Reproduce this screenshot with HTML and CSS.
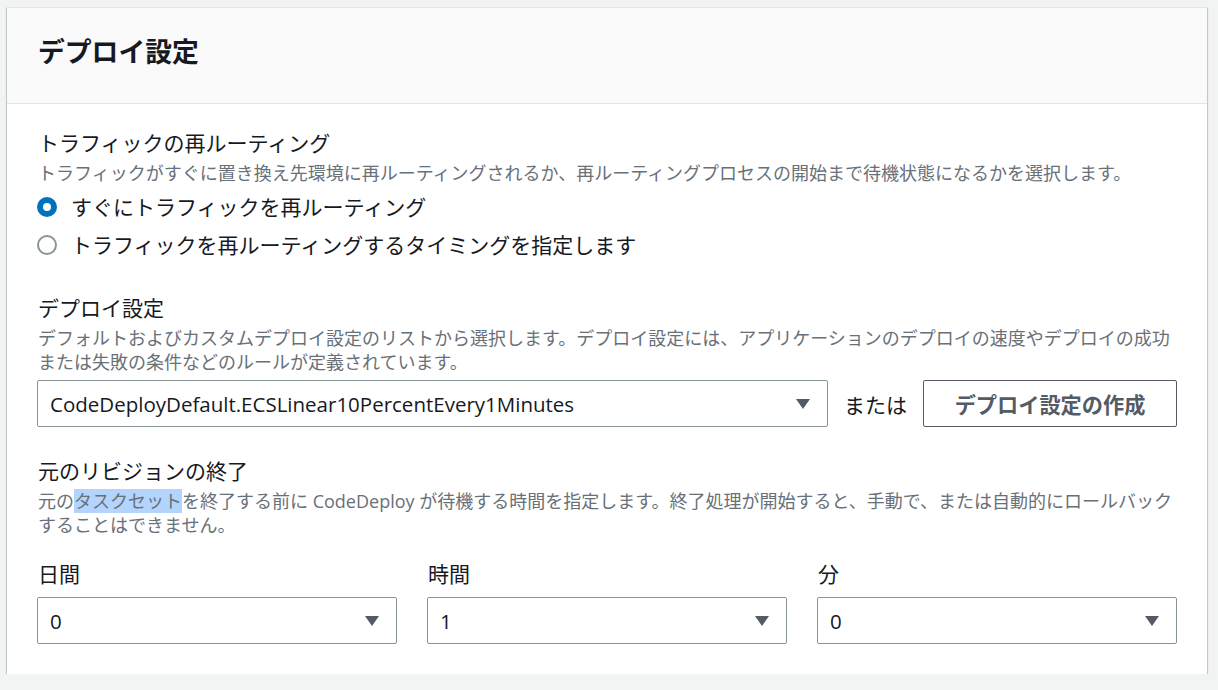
FILE: index.html
```html
<!DOCTYPE html>
<html lang="ja">
<head>
<meta charset="utf-8">
<title>デプロイ設定</title>
<link rel="stylesheet" href="styles.css">
</head>
<body>
<div class="card">
  <div class="card-header">
    <h2 class="title">デプロイ設定</h2>
  </div>
  <div class="card-body">
    <div class="field">
      <div class="label">トラフィックの再ルーティング</div>
      <div class="desc">トラフィックがすぐに置き換え先環境に再ルーティングされるか、再ルーティングプロセスの開始まで待機状態になるかを選択します。</div>
      <div class="radios">
        <div class="radio-row"><span class="radio checked"></span><span class="radio-text">すぐにトラフィックを再ルーティング</span></div>
        <div class="radio-row"><span class="radio"></span><span class="radio-text">トラフィックを再ルーティングするタイミングを指定します</span></div>
      </div>
    </div>

    <div class="field section">
      <div class="label">デプロイ設定</div>
      <div class="desc">デフォルトおよびカスタムデプロイ設定のリストから選択します。デプロイ設定には、アプリケーションのデプロイの速度やデプロイの成功<br>または失敗の条件などのルールが定義されています。</div>
      <div class="config-row">
        <div class="select grow">
          <span class="select-value">CodeDeployDefault.ECSLinear10PercentEvery1Minutes</span>
          <svg class="caret" width="14" height="10" viewBox="0 0 14 10"><path d="M0 0H14L7 10Z" fill="#545b64"/></svg>
        </div>
        <span class="or">または</span>
        <div class="button">デプロイ設定の作成</div>
      </div>
    </div>

    <div class="field section">
      <div class="label">元のリビジョンの終了</div>
      <div class="desc">元の<span class="hl">タスクセット</span>を終了する前に CodeDeploy が待機する時間を指定します。終了処理が開始すると、手動で、または自動的にロールバック<br>することはできません。</div>
      <div class="time-grid">
        <div class="time-col">
          <div class="label">日間</div>
          <div class="select">
            <span class="select-value">0</span>
            <svg class="caret" width="14" height="10" viewBox="0 0 14 10"><path d="M0 0H14L7 10Z" fill="#545b64"/></svg>
          </div>
        </div>
        <div class="time-col">
          <div class="label">時間</div>
          <div class="select">
            <span class="select-value">1</span>
            <svg class="caret" width="14" height="10" viewBox="0 0 14 10"><path d="M0 0H14L7 10Z" fill="#545b64"/></svg>
          </div>
        </div>
        <div class="time-col">
          <div class="label">分</div>
          <div class="select">
            <span class="select-value">0</span>
            <svg class="caret" width="14" height="10" viewBox="0 0 14 10"><path d="M0 0H14L7 10Z" fill="#545b64"/></svg>
          </div>
        </div>
      </div>
    </div>
  </div>
</div>
</body>
</html>
```

FILE: styles.css
```css
* { box-sizing: border-box; }

html, body {
  margin: 0;
  padding: 0;
  background: #f2f3f3;
}

body {
  padding: 7px 11px 0 7px;
  font-family: "Open Sans", "Noto Sans CJK JP", sans-serif;
  color: #16191f;
}

.card {
  width: 1200px;
  background: #ffffff;
  border-top: 1px solid #e4e6e6;
  box-shadow: 0 1px 1px 0 rgba(0, 28, 36, 0.3), 1px 1px 1px 0 rgba(0, 28, 36, 0.15), -1px 1px 1px 0 rgba(0, 28, 36, 0.15);
}

.card-header {
  background: #fafafa;
  border-bottom: 1px solid #e4e6e6;
  height: 96px;
  padding: 27px 31px 0;
}

.title {
  margin: 0;
  font-size: 26.8px;
  line-height: 34px;
  font-weight: 700;
  color: #16191f;
}

.card-body {
  padding: 25px 30px 30px;
}

.label {
  font-size: 21px;
  line-height: 28px;
  color: #16191f;
  padding-left: 1px;
}

.desc {
  margin-top: 4px;
  font-size: 18px;
  line-height: 24px;
  color: #687078;
  padding-left: 1px;
  white-space: nowrap;
}

.hl {
  background: #b3d4fc;
}

.section {
  margin-top: 30px;
}

.radios {
  margin-top: 3px;
}

.radio-row {
  display: flex;
  align-items: center;
  height: 38px;
  gap: 14px;
}

.radio {
  width: 20px;
  height: 20px;
  border-radius: 50%;
  border: 2px solid #879596;
  background: #ffffff;
  flex: none;
}

.radio.checked {
  border: 6px solid #0073bb;
}

.radio-text {
  font-size: 21px;
  line-height: 28px;
  color: #16191f;
}

.config-row {
  margin-top: 6px;
  margin-bottom: 3px;
  display: flex;
  align-items: center;
  gap: 16px;
}

.select {
  height: 47px;
  border: 1px solid #879596;
  border-radius: 2px;
  background: #ffffff;
  display: flex;
  align-items: center;
  justify-content: space-between;
  padding: 0 17px 0 12px;
}

.select.grow {
  flex: 1;
}

.select-value {
  font-size: 20.5px;
  color: #16191f;
  white-space: nowrap;
}

.caret {
  flex: none;
  display: block;
}

.or {
  font-size: 21px;
  color: #16191f;
}

.button {
  width: 254px;
  height: 47px;
  border: 1px solid #545b64;
  border-radius: 2px;
  display: flex;
  align-items: center;
  justify-content: center;
  font-size: 21.2px;
  font-weight: 700;
  color: #545b64;
}

.time-grid {
  margin-top: 23px;
  display: grid;
  grid-template-columns: repeat(3, 1fr);
  gap: 30px;
}

.time-col .select {
  margin-top: 9px;
}
```
